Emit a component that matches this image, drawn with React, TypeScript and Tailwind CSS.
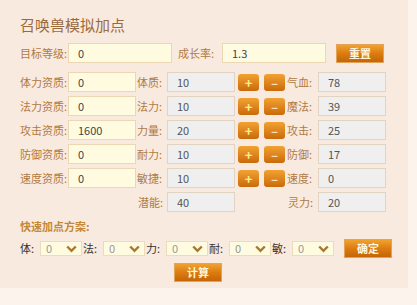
import React from "react";

const font = { fontFamily: '"Noto Sans CJK SC", "Noto Sans", sans-serif' };

const lbl = "text-[11px] leading-[20px] text-[#b07a44] whitespace-nowrap";
const yellowInput =
  "h-[20px] border border-[#ecd6b4] bg-[#fffbe1] pl-[9px] text-[11px] text-[#444] outline-none";
const grayInput =
  "h-[20px] border border-[#e2d3c3] bg-[#efefef] pl-[9px] text-[11px] text-[#555] outline-none";
const orangeBtn =
  "flex items-center justify-center border border-[#e4a458] bg-gradient-to-b from-[#f0a12e] via-[#dc7c10] to-[#c56506] text-[11px] font-bold text-[#fff6dc]";

function Field({ w, value, gray }: { w: string; value: string; gray?: boolean }) {
  return (
    <input
      readOnly
      value={value}
      className={`${w} ${gray ? grayInput : yellowInput}`}
      style={font}
    />
  );
}

function SmallBtn({ children, className }: { children: React.ReactNode; className?: string }) {
  return (
    <button
      className={`flex h-[17px] w-[21px] items-center justify-center rounded-[3px] bg-gradient-to-b from-[#f2a232] to-[#c96a08] text-[13px] font-bold leading-none ${className ?? ""}`}
    >
      {children}
    </button>
  );
}

type Row = { a: string; av: string; b: string; bv: string; c: string; cv: string };
const rows: Row[] = [
  { a: "体力资质:", av: "0", b: "体质:", bv: "10", c: "气血:", cv: "78" },
  { a: "法力资质:", av: "0", b: "法力:", bv: "10", c: "魔法:", cv: "39" },
  { a: "攻击资质:", av: "1600", b: "力量:", bv: "20", c: "攻击:", cv: "25" },
  { a: "防御资质:", av: "0", b: "耐力:", bv: "10", c: "防御:", cv: "17" },
  { a: "速度资质:", av: "0", b: "敏捷:", bv: "10", c: "速度:", cv: "0" },
];

function Sel({ label, first }: { label: string; first?: boolean }) {
  return (
    <div className="flex items-center">
      <span className={`${first ? "w-[20px]" : "w-[21px] pl-[1px]"} text-[11px] text-[#333]`}>{label}</span>
      <div className="flex h-[15px] w-[42px] items-center justify-between border border-[#ecdcbc] bg-[#fffbe1] pl-[5px] pr-[4px]">
        <span className="text-[11px] leading-none text-[#999]">0</span>
        <svg width="11" height="8" viewBox="0 0 11 8">
          <path d="M1.2 1.5 L5.5 5.8 L9.8 1.5" fill="none" stroke="#a7782f" strokeWidth="2.4" />
        </svg>
      </div>
    </div>
  );
}

export default function App() {
  return (
    <div className="h-[305px] w-[417px] bg-[#fcf3ec]" style={font}>
      <div className="h-[288px] w-[408px] bg-[#f9eadf] pl-[20px] pt-[14px]">
        <div className="h-[22px] text-[15px] leading-[22px] text-[#9a6a3c]">召唤兽模拟加点</div>

        <div className="mt-[7px] flex h-[20px] items-center">
          <span className={`${lbl} w-[48px]`}>目标等级:</span>
          <Field w="w-[104px]" value="0" />
          <span className={`${lbl} w-[50px] pl-[6px]`}>成长率:</span>
          <Field w="w-[104px]" value="1.3" />
          <button className={`${orangeBtn} ml-[10px] h-[19px] w-[48px]`}>重置</button>
        </div>

        <div className="mt-[9px] flex flex-col gap-[4px]">
          {rows.map((r) => (
            <div key={r.a} className="flex h-[20px] items-center">
              <span className={`${lbl} w-[48px]`}>{r.a}</span>
              <Field w="w-[68px]" value={r.av} />
              <span className={`${lbl} w-[31px] pl-[1px]`}>{r.b}</span>
              <Field w="w-[68px]" value={r.bv} gray />
              <SmallBtn className="ml-[3px] text-[#ffec8c]">+</SmallBtn>
              <SmallBtn className="ml-[5px] text-[#ffdca8]">–</SmallBtn>
              <span className={`${lbl} w-[33px] pl-[2px]`}>{r.c}</span>
              <Field w="w-[68px]" value={r.cv} gray />
            </div>
          ))}
          <div className="flex h-[20px] items-center">
            <div className="w-[116px]" />
            <span className={`${lbl} w-[31px] pl-[2px]`}>潜能:</span>
            <Field w="w-[68px]" value="40" gray />
            <div className="w-[50px]" />
            <span className={`${lbl} w-[33px] pl-[3px]`}>灵力:</span>
            <Field w="w-[68px]" value="20" gray />
          </div>
        </div>

        <div className="mt-[7px] h-[14px] text-[11px] font-bold leading-[14px] text-[#c48836]">快速加点方案:</div>

        <div className="mt-[6px] flex h-[19px] items-center">
          <Sel label="体:" first />
          <Sel label="法:" />
          <Sel label="力:" />
          <Sel label="耐:" />
          <Sel label="敏:" />
          <button className={`${orangeBtn} ml-[10px] h-[19px] w-[48px]`}>确定</button>
        </div>

        <button className={`${orangeBtn} ml-[154px] mt-[5px] h-[19px] w-[48px]`}>计算</button>
      </div>
    </div>
  );
}
